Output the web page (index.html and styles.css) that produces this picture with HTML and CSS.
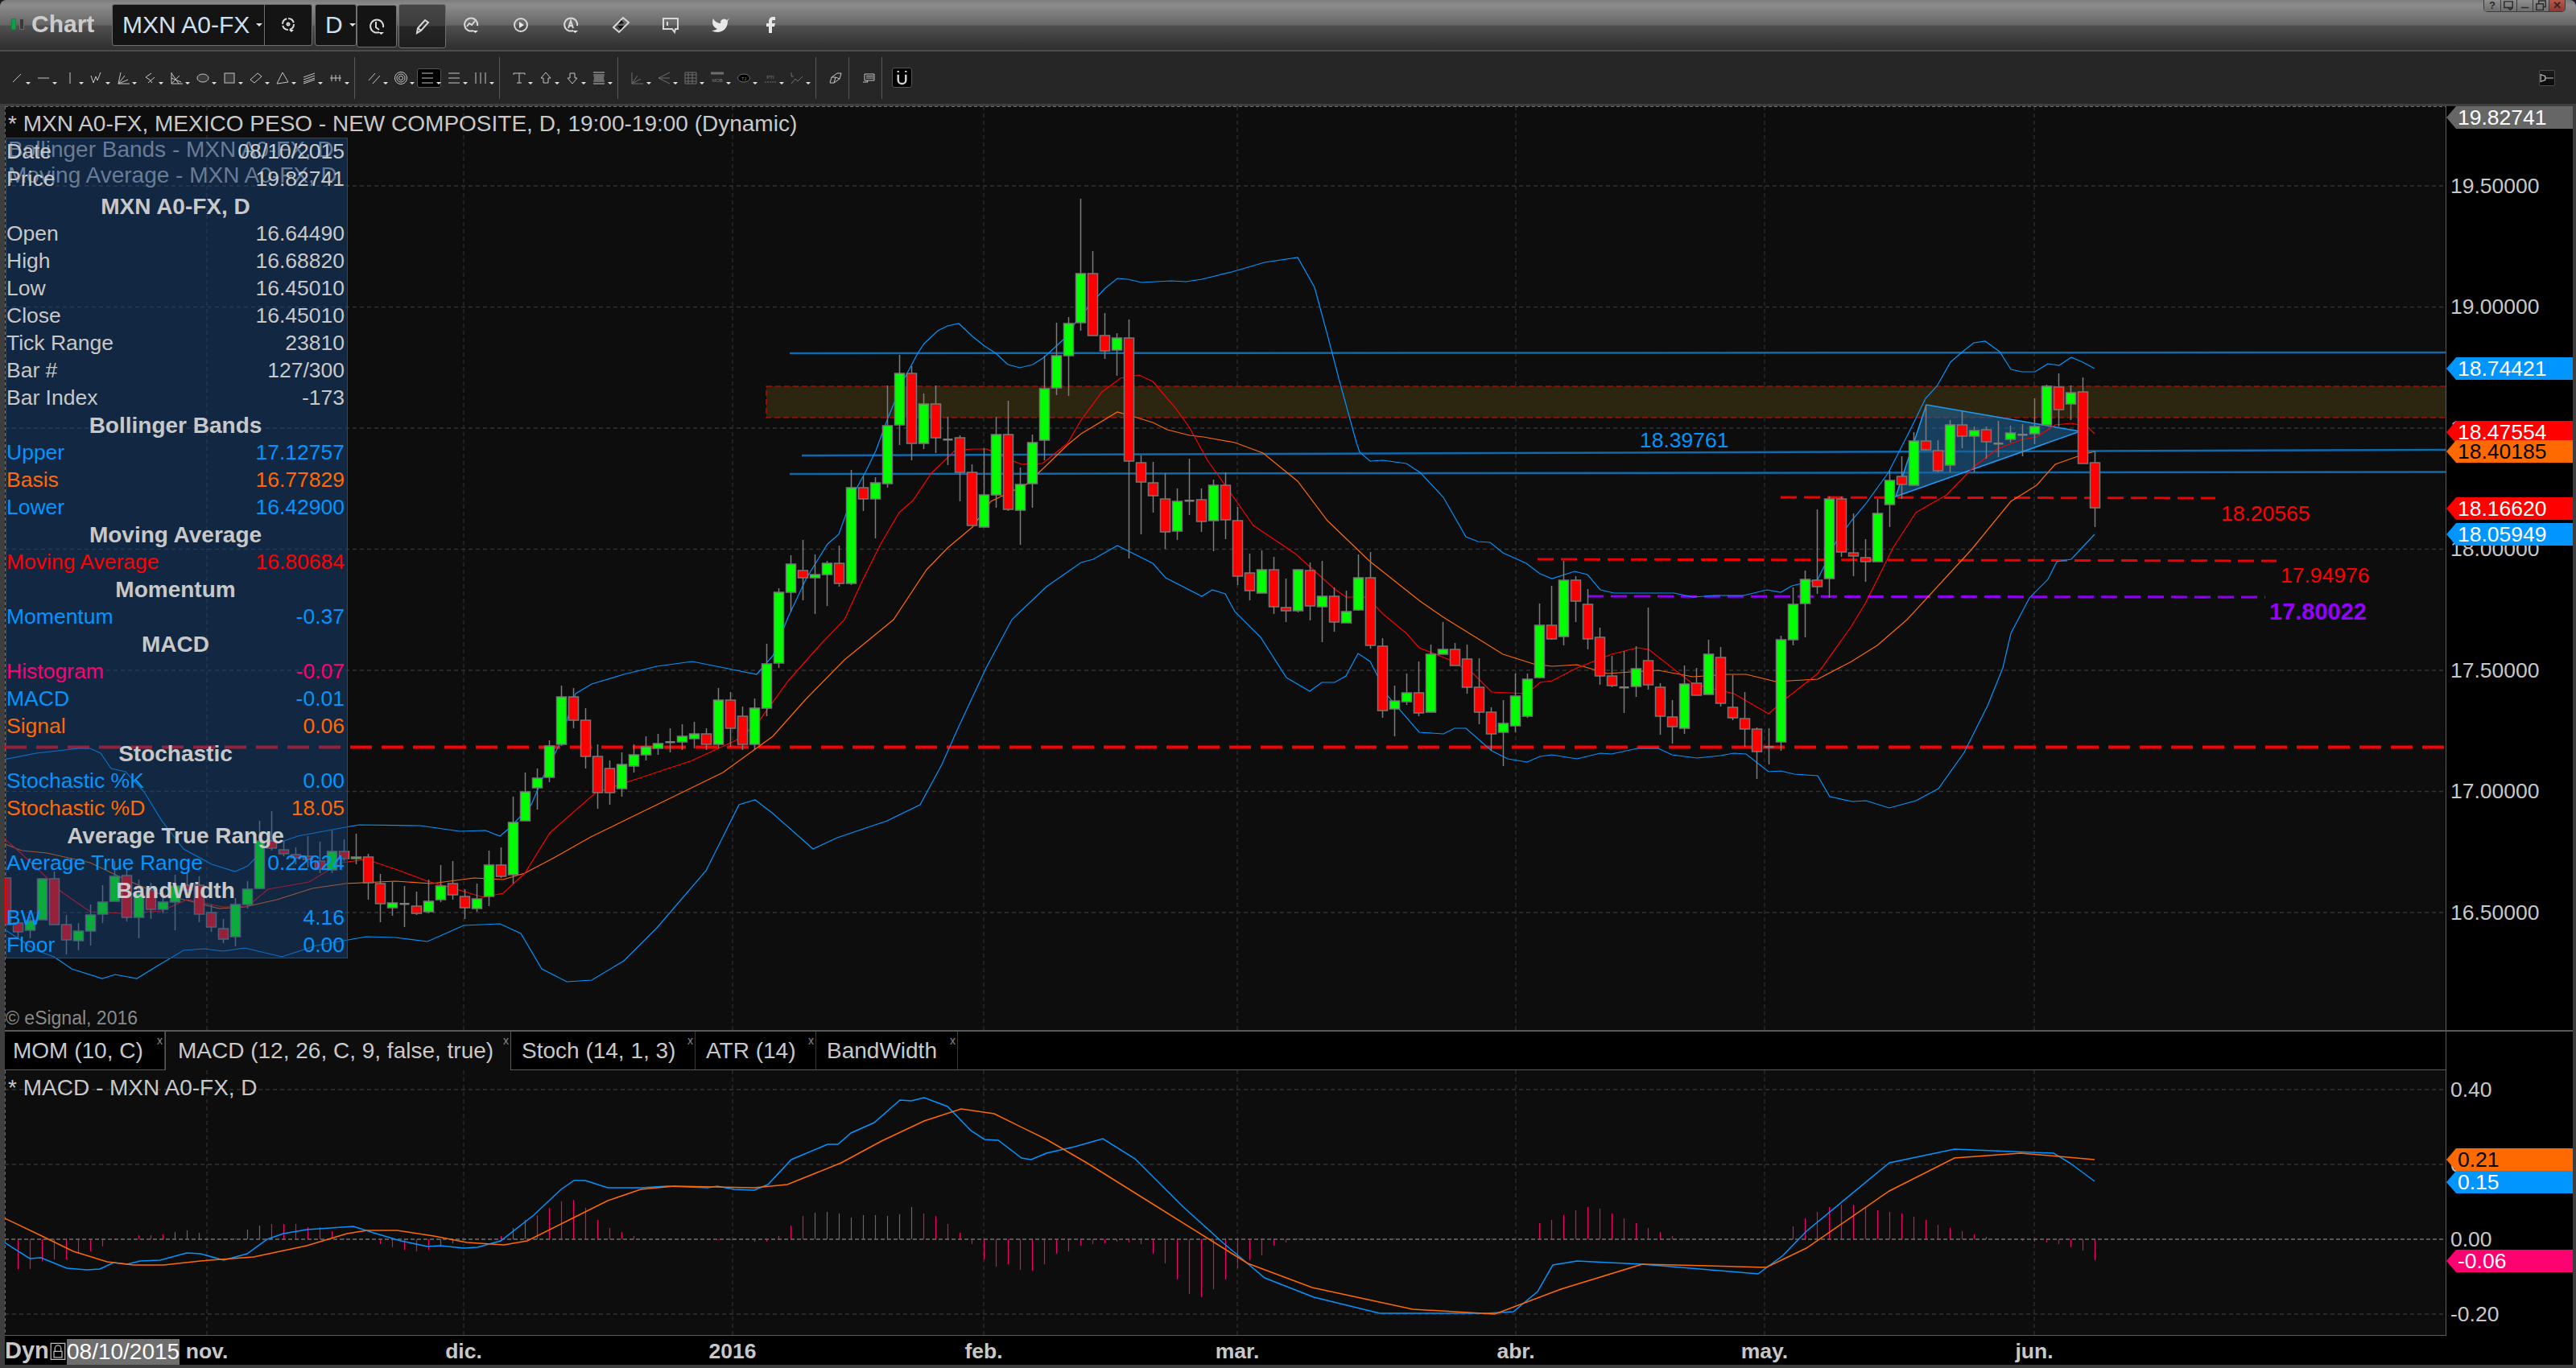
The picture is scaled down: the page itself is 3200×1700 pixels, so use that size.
FILE: index.html
```html
<!DOCTYPE html>
<html lang="es">
<head>
    <meta charset="UTF-8">
    <title>Chart - MXN A0-FX</title>
    <link rel="stylesheet" href="styles.css">
</head>
<body>
<div class="window">
    <header class="titlebar">
        <span class="led led-on"></span><span class="led"></span>
        <span class="app-name">Chart</span>
        <div class="symbol-box">
            <span class="symbol">MXN A0-FX</span><i class="caret small"></i>
            <span class="symbol-gear">
                <svg class="ticon" viewBox="0 0 24 24"><circle cx="12" cy="11" r="7" stroke-dasharray="9 2"/><circle cx="12" cy="11" r="1.500"/><path class="solid" d="M13 18h6l-3 3z"/></svg>
            </span>
        </div>
        <div class="interval-box"><span class="symbol">D</span><i class="caret small"></i></div>
        <div class="clock-box">
            <svg class="ticon" viewBox="0 0 24 24"><path d="M15 19a8 8 0 1 1 5-6"/><path d="M11 6v7l4 3"/><path class="solid" d="M14 19h7l-3.500 3z"/></svg>
        </div>
        <div class="pencil-box">
            <svg class="ticon" viewBox="0 0 24 24"><path d="M5 20l1-6 9-10 4 3-9 10zM6 14l4 3"/></svg>
        </div>
        <span class="title-icon"><svg class="ticon" viewBox="0 0 24 24"><path d="M15 19a8 8 0 1 1 5-6"/><path d="M7 14l3-4 3 2 4-5"/><path class="solid" d="M14 19h7l-3.500 3z"/></svg></span>
        <span class="title-icon"><svg class="ticon" viewBox="0 0 24 24"><circle cx="12" cy="12" r="8"/><path class="solid" d="M10 8l6 4-6 4z"/></svg></span>
        <span class="title-icon"><svg class="ticon" viewBox="0 0 24 24"><path d="M15 19a8 8 0 1 1 5-6"/><path d="M9 16l3-9 3 9M10 13h4"/><path class="solid" d="M14 19h7l-3.500 3z"/></svg></span>
        <span class="title-icon"><svg class="ticon" viewBox="0 0 24 24"><path d="M15 3l7 6-12 12-7-6z"/><path class="dark" d="M9 11l4-5 3 4zM8 13h8l-4 5z"/></svg></span>
        <span class="title-icon"><svg class="ticon" viewBox="0 0 24 24"><path d="M3 4h18v13h-3l-1 4-3-4H3z"/><path d="M8 8v5"/></svg></span>
        <span class="title-icon"><svg class="ticon solid" viewBox="0 0 24 24"><path d="M23 3a10.9 10.9 0 0 1-3 3 4.5 4.5 0 0 0-7.9 3v1A10.7 10.7 0 0 1 3 4s-4 9 5 13a11.6 11.6 0 0 1-7 2c9 5 20 0 20-11.5 0-.3 0-.5-.1-.8A7.7 7.7 0 0 0 23 3z"/></svg></span>
        <span class="title-icon"><svg class="ticon solid" viewBox="0 0 24 24"><path d="M18 2h-3a5 5 0 0 0-5 5v3H7v4h3v8h4v-8h3l1-4h-4V7a1 1 0 0 1 1-1h3z"/></svg></span>
        <div class="win-buttons">
            <span class="win-btn">?</span>
            <span class="win-btn"><svg viewBox="0 0 20 14"><path d="M4 2h11v8H4zM9 10l3 3 3-3" /></svg></span>
            <span class="win-btn"><svg viewBox="0 0 20 14"><path d="M5 10h10"/></svg></span>
            <span class="win-btn"><svg viewBox="0 0 20 14"><path d="M4 5h9v8H4zM7 5V1h9v8h-3"/></svg></span>
            <span class="win-btn win-close">✕</span>
        </div>
    </header>

    <div class="toolbar">
        <span class="tool"><svg viewBox="0 0 16 16"><path d="M3 13 13 3"/></svg><i class="caret"></i></span>
        <span class="tool"><svg viewBox="0 0 16 16"><path d="M1 8h14"/></svg><i class="caret"></i></span>
        <span class="tool"><svg viewBox="0 0 16 16"><path d="M8 1v14"/></svg><i class="caret"></i></span>
        <span class="tool"><svg viewBox="0 0 16 16"><path d="M1 5l3 9 3-8 2 5 4-10"/></svg><i class="caret"></i></span>
        <span class="tool"><svg viewBox="0 0 16 16"><path d="M2 15 5 1M2 15l8-10M2 15l12-5M2 15h14"/></svg><i class="caret"></i></span>
        <span class="tool"><svg viewBox="0 0 16 16"><path d="M3 7l7-5M6 14l8-7M3 7l5 3 3 4"/></svg><i class="caret"></i></span>
        <span class="tool"><svg viewBox="0 0 16 16"><path d="M2 2l9 13M2 15 12 5M2 15h14M2 1v14M2 8l12 5"/></svg><i class="caret"></i></span>
        <span class="tool"><svg viewBox="0 0 16 16"><ellipse class="shade" cx="8" cy="8" rx="7" ry="5"/></svg><i class="caret"></i></span>
        <span class="tool"><svg viewBox="0 0 16 16"><rect class="shade" x="2" y="2" width="12" height="12"/></svg><i class="caret"></i></span>
        <span class="tool"><svg viewBox="0 0 16 16"><path d="M10 2l5 4-9 8-5-4z"/></svg><i class="caret"></i></span>
        <span class="tool"><svg viewBox="0 0 16 16"><path d="M8 1l7 12-14 2z"/></svg><i class="caret"></i></span>
        <span class="tool"><svg viewBox="0 0 16 16"><path d="M1 7l14-5M1 10l14-5M1 13l14-5M1 15l14-5"/></svg><i class="caret"></i></span>
        <span class="tool"><svg viewBox="0 0 16 16"><path d="M1 8h14M3 4v8M8 4v8M13 4v8"/></svg><i class="caret"></i></span>
        <span class="tb-sep"></span>
        <span class="tool"><svg viewBox="0 0 16 16"><path d="M1 11 9 2M6 15l9-10"/></svg><i class="caret"></i></span>
        <span class="tool"><svg viewBox="0 0 16 16"><circle cx="8" cy="8" r="7.5"/><circle cx="8" cy="8" r="5"/><circle cx="8" cy="8" r="2.5"/></svg><i class="caret"></i></span>
        <span class="tool tool-on"><svg viewBox="0 0 16 16"><path d="M1 2h14M1 8h14M1 14h14"/></svg><i class="caret"></i></span>
        <span class="tool"><svg viewBox="0 0 16 16"><path d="M1 2h14M1 8h14M1 14h14"/></svg><i class="caret"></i></span>
        <span class="tool"><svg viewBox="0 0 16 16"><path d="M2 1v14M8 1v14M14 1v14"/></svg><i class="caret"></i></span>
        <span class="tb-sep"></span>
        <span class="tool"><svg viewBox="0 0 16 16"><path d="M1 2h14M8 2v12M5 14h6M1 2v2M15 2v2"/></svg><i class="caret"></i></span>
        <span class="tool"><svg viewBox="0 0 16 16"><path d="M8 1l6 7h-3v6H5V8H2z"/></svg><i class="caret"></i></span>
        <span class="tool"><svg viewBox="0 0 16 16"><path d="M5 2h6v6h3l-6 7-6-7h3z"/></svg><i class="caret"></i></span>
        <span class="tool"><svg viewBox="0 0 16 16"><path class="band" d="M1 3h14l-1 5 1 5H1l1-5z"/><path d="M1 1h14M1 15h14"/></svg><i class="caret"></i></span>
        <span class="tb-sep"></span>
        <span class="tool tool-dim"><svg viewBox="0 0 16 16"><path d="M1 15V1M1 15h14M1 15 8 5M1 15l11-6"/></svg><i class="caret"></i></span>
        <span class="tool tool-dim"><svg viewBox="0 0 16 16"><path d="M15 1 1 8l14 7M1 8h14"/></svg><i class="caret"></i></span>
        <span class="tool tool-dim"><svg viewBox="0 0 16 16"><path d="M1 1h14v14H1zM1 4h14M1 8h14M1 12h14M5 1v14M10 1v14"/></svg><i class="caret"></i></span>
        <span class="tool tool-dim"><svg viewBox="0 0 16 16"><path class="wide" d="M0 2h16"/><text x="8" y="13">MOB</text></svg><i class="caret"></i></span>
        <span class="tool tool-dim"><svg viewBox="0 0 16 16"><ellipse class="black" cx="8" cy="8" rx="7.5" ry="5"/><text x="8" y="10.5">TJ</text></svg><i class="caret"></i></span>
        <span class="tool tool-dim"><svg viewBox="0 0 16 16"><text x="8" y="9">PTI</text><path d="M1 13h14" stroke-dasharray="2 1"/></svg><i class="caret"></i></span>
        <span class="tool tool-dim"><svg viewBox="0 0 16 16"><path d="M1 1v5h3M1 15l5-6 3 3 6-6"/></svg><i class="caret"></i></span>
        <span class="tb-sep"></span>
        <span class="tool tool-plain"><svg viewBox="0 0 16 16"><path d="M1 14l2-7 7-5h5l-2 7-7 5zM3 7h5l-2 7M8 7l5 2"/></svg></span>
        <span class="tb-sep"></span>
        <span class="tool tool-plain"><svg viewBox="0 0 16 16"><path d="M3 3h12v8H3zM5 5.5h9M5 8h9"/><path d="M1 13h6l-1-2"/></svg></span>
        <span class="tb-sep"></span>
        <span class="magnet"><svg viewBox="0 0 16 24"><path d="M3 8v7a5 5 0 0 0 10 0V8"/><path d="M3 3v2M13 3v2"/></svg></span>
        <span class="pin"><svg viewBox="0 0 16 16"><path d="M1 4v8l5-2V6zM6 8h9"/></svg></span>
    </div>

    <main class="workspace">
        <div class="chart-row">
            <div class="pane">
                <svg class="plot" id="price-plot" viewBox="6 132 3032 1148"></svg>
                <div class="legend">
                    <div class="legend-main">* MXN A0-FX, MEXICO PESO - NEW COMPOSITE, D, 19:00-19:00 (Dynamic)</div>
                    <div>Bollinger Bands - MXN A0-FX, D</div>
                    <div>Moving Average - MXN A0-FX, D</div>
                </div>
                <span class="note note-blue" style="left:2031px;top:399px">18.39761</span>
                <span class="note note-red" style="left:2753px;top:490px">18.20565</span>
                <span class="note note-red" style="left:2827px;top:567px">17.94976</span>
                <span class="note note-purple" style="left:2813px;top:612px">17.80022</span>
                <span class="copyright">© eSignal, 2016</span>

                <div class="data-panel">
                    <div class="row"><span>Date</span><span>08/10/2015</span></div>
                    <div class="row"><span>Price</span><span>19.82741</span></div>
                    <div class="row row-head">MXN A0-FX, D</div>
                    <div class="row"><span>Open</span><span>16.64490</span></div>
                    <div class="row"><span>High</span><span>16.68820</span></div>
                    <div class="row"><span>Low</span><span>16.45010</span></div>
                    <div class="row"><span>Close</span><span>16.45010</span></div>
                    <div class="row"><span>Tick Range</span><span>23810</span></div>
                    <div class="row"><span>Bar #</span><span>127/300</span></div>
                    <div class="row"><span>Bar Index</span><span>-173</span></div>
                    <div class="row row-head">Bollinger Bands</div>
                    <div class="row blue"><span>Upper</span><span>17.12757</span></div>
                    <div class="row orange"><span>Basis</span><span>16.77829</span></div>
                    <div class="row blue"><span>Lower</span><span>16.42900</span></div>
                    <div class="row row-head">Moving Average</div>
                    <div class="row red"><span>Moving Average</span><span>16.80684</span></div>
                    <div class="row row-head">Momentum</div>
                    <div class="row blue"><span>Momentum</span><span>-0.37</span></div>
                    <div class="row row-head">MACD</div>
                    <div class="row pink"><span>Histogram</span><span>-0.07</span></div>
                    <div class="row blue"><span>MACD</span><span>-0.01</span></div>
                    <div class="row orange"><span>Signal</span><span>0.06</span></div>
                    <div class="row row-head">Stochastic</div>
                    <div class="row blue"><span>Stochastic %K</span><span>0.00</span></div>
                    <div class="row orange"><span>Stochastic %D</span><span>18.05</span></div>
                    <div class="row row-head">Average True Range</div>
                    <div class="row blue"><span>Average True Range</span><span>0.22624</span></div>
                    <div class="row row-head">BandWidth</div>
                    <div class="row blue"><span>BW</span><span>4.16</span></div>
                    <div class="row blue"><span>Floor</span><span>0.00</span></div>
                </div>
            </div>
            <div class="axis">
                <span class="tick" style="top:99px">19.50000</span>
                <span class="tick" style="top:249px">19.00000</span>
                <span class="tick" style="top:400px">18.50000</span>
                <span class="tick" style="top:550px">18.00000</span>
                <span class="tick" style="top:701px">17.50000</span>
                <span class="tick" style="top:851px">17.00000</span>
                <span class="tick" style="top:1002px">16.50000</span>
                <span class="tag tag-gray" style="top:0">19.82741</span>
                <span class="tag tag-blue" style="top:312px">18.74421</span>
                <span class="tag tag-red" style="top:391px">18.47554</span>
                <span class="tag tag-orange" style="top:415px">18.40185</span>
                <span class="tag tag-red" style="top:486px">18.16620</span>
                <span class="tag tag-blue" style="top:518px">18.05949</span>
            </div>
        </div>

        <div class="divider"></div>

        <div class="tab-row">
            <div class="tabs">
                <span class="tab tab-mom">MOM (10, C)<i>x</i></span>
                <span class="tab tab-on">MACD (12, 26, C, 9, false, true)<i>x</i></span>
                <span class="tab tab-stoch">Stoch (14, 1, 3)<i>x</i></span>
                <span class="tab tab-atr">ATR (14)<i>x</i></span>
                <span class="tab tab-bw">BandWidth<i>x</i></span>
            </div>
        </div>

        <div class="macd-row">
            <div class="pane pane-macd">
                <svg class="plot" id="macd-plot" viewBox="6 1330 3032 329"></svg>
                <div class="legend legend-macd">* MACD - MXN A0-FX, D</div>
            </div>
            <div class="axis">
                <span class="tick" style="top:24px">0.40</span>
                <span class="tick" style="top:117px">0.20</span>
                <span class="tick" style="top:210px">0.00</span>
                <span class="tick" style="top:303px">-0.20</span>
                <span class="tag tag-orange" style="top:97px">0.21</span>
                <span class="tag tag-blue" style="top:125px">0.15</span>
                <span class="tag tag-pink" style="top:223px">-0.06</span>
            </div>
        </div>

        <div class="time-row">
            <div class="time-axis">
                <span class="dyn">Dyn</span>
                <span class="lock"><svg viewBox="0 0 16 18"><path d="M1 1h14v16H1zM5 9V6a3 3 0 0 1 6 0v3M4 9h8v6H4z"/></svg></span>
                <span class="cursor-date">08/10/2015</span>
                <span class="month" style="left:251px">nov.</span>
                <span class="month" style="left:570px">dic.</span>
                <span class="month" style="left:904px">2016</span>
                <span class="month" style="left:1216px">feb.</span>
                <span class="month" style="left:1531px">mar.</span>
                <span class="month" style="left:1877px">abr.</span>
                <span class="month" style="left:2186px">may.</span>
                <span class="month" style="left:2521px">jun.</span>
            </div>
        </div>
    </main>
</div>
<script src="chart.js"></script>
</body>
</html>
```

FILE: styles.css
```css
* {
    box-sizing: border-box;
}
html, body {
    margin: 0;
    padding: 0;
    background: #1c1c1c;
}
body {
    font-family: "Liberation Sans", Arial, sans-serif;
    font-size: 26.5px;
    color: #c8c8c8;
}
.window {
    width: 3200px;
    height: 1700px;
    display: flex;
    flex-direction: column;
    overflow: hidden;
    border-radius: 8px 8px 0 0;
    background: #444;
}

/* title bar */
.titlebar {
    height: 64px;
    flex: none;
    display: flex;
    align-items: flex-start;
    padding: 5px 0 0 14px;
    position: relative;
    border-bottom: 2px solid #4c4c4c;
    background: linear-gradient(#7c7c7c 0, #8c8c8c 6px, #666 31px, #505050 32px, #2e2e2e 62px);
}
.led {
    width: 6px;
    height: 14px;
    margin: 18px 4px 0 0;
    border: 1px solid #6c6c6c;
    background: #3a3a3a;
}
.led-on {
    background: #0ba04a;
    border-color: #0a8a3f;
}
.app-name {
    font-size: 30px;
    font-weight: bold;
    line-height: 50px;
    margin-left: 5px;
    width: 100px;
    color: #cccccc;
}
.symbol-box, .interval-box, .clock-box, .pencil-box {
    display: flex;
    align-items: center;
    background: #141414;
    border: 1px solid #707070;
    border-radius: 3px;
}
.symbol-box {
    width: 249px;
    height: 52px;
    padding-left: 12px;
}
.symbol {
    font-size: 30px;
    color: #cfe0f2;
}
.symbol-gear {
    margin-left: auto;
    width: 59px;
    height: 100%;
    display: flex;
    align-items: center;
    justify-content: center;
    border-left: 1px solid #707070;
}
.interval-box {
    width: 52px;
    height: 52px;
    margin-left: 3px;
    padding-left: 12px;
}
.clock-box {
    width: 50px;
    height: 53px;
    margin-top: 1px;
    justify-content: center;
}
.pencil-box {
    width: 59px;
    height: 55px;
    margin-left: 2px;
    justify-content: center;
    background: linear-gradient(#464646 0, #3c3c3c 26px, #262626 27px, #1e1e1e 100%);
}
.title-icon {
    width: 62px;
    height: 52px;
    display: flex;
    align-items: center;
    justify-content: center;
}
.title-icon:first-of-type {
    margin-left: 2px;
}
.ticon {
    width: 24px;
    height: 24px;
    fill: none;
    stroke: #d8d8d8;
    stroke-width: 2;
}
.ticon.solid, .ticon .solid {
    fill: #e8e8e8;
    stroke: none;
}
.ticon .dark {
    fill: #111;
    stroke: none;
}
.caret {
    display: block;
    width: 0;
    height: 0;
    border-left: 4px solid transparent;
    border-right: 4px solid transparent;
    border-top: 4px solid #e4e4e4;
}
.caret.small {
    margin-left: 8px;
}
.win-buttons {
    position: absolute;
    top: 0;
    right: 13px;
    display: flex;
    height: 15px;
    border: 1px solid #3c3c3c;
    border-top: none;
    border-radius: 0 0 5px 5px;
    overflow: hidden;
}
.win-btn {
    width: 20px;
    font-size: 13px;
    font-weight: bold;
    line-height: 14px;
    text-align: center;
    color: #2a2a2a;
    border-left: 1px solid #3c3c3c;
    background: linear-gradient(#8e8e8e, #6e6e6e);
}
.win-btn:first-child {
    border-left: none;
}
.win-btn svg {
    display: block;
    fill: none;
    stroke: #2a2a2a;
    stroke-width: 1.5;
}
.win-close {
    background: linear-gradient(#b9584a, #96392d);
}

/* drawing tools */
.toolbar {
    height: 65px;
    flex: none;
    display: flex;
    align-items: center;
    padding: 0 4px 0 5px;
    background: #262626;
}
.tool {
    width: 33px;
    height: 24px;
    flex: none;
    display: flex;
    align-items: center;
    padding-left: 8px;
}
.tool svg {
    width: 16px;
    height: 16px;
    flex: none;
    fill: none;
    stroke: #c4c4c4;
    stroke-width: 1;
    overflow: visible;
}
.tool .caret {
    margin: 14px 0 0 3px;
    border-left-width: 3px;
    border-right-width: 3px;
    border-top-width: 3px;
}
.tool-on {
    width: 30px;
    margin-left: 3px;
    padding-left: 4px;
    background: #000;
    border: 1px solid #555;
    border-radius: 3px;
}
.tool-dim svg {
    stroke: #6e6e6e;
}
.tool svg text {
    font-size: 6px;
    text-anchor: middle;
    fill: #7c7c7c;
    stroke: none;
}
.tool svg .wide {
    stroke-width: 3;
}
.tool svg .black {
    fill: #000;
}
.tool svg .shade {
    fill: #3a3a3a;
}
.tool svg .band {
    fill: #6a6a6a;
    stroke: none;
}
.tool-plain {
    width: 26px;
}
.tb-sep {
    width: 1px;
    height: 52px;
    flex: none;
    margin: 0 8px 0 6px;
    background: #585858;
}
.magnet {
    width: 25px;
    height: 25px;
    margin-left: 4px;
    background: #000;
    border: 1px solid #555;
    border-radius: 3px;
}
.magnet svg {
    display: block;
    width: 100%;
    height: 100%;
    fill: none;
    stroke: #d8d8d8;
    stroke-width: 2.5;
}
.pin {
    width: 20px;
    height: 20px;
    margin-left: auto;
    margin-right: 22px;
    background: linear-gradient(#1a1a1a, #0a0a0a);
    border: 1px solid #4a4a4a;
    border-radius: 2px;
}
.pin svg {
    display: block;
    fill: none;
    stroke: #c4c4c4;
    stroke-width: 1;
}

/* chart panes */
.workspace {
    flex: 1;
    display: flex;
    flex-direction: column;
    padding: 3px 4px 4px 6px;
    background: #3e3e3e;
}
.chart-row {
    height: 1148px;
    flex: none;
    display: flex;
}
.pane {
    width: 3032px;
    flex: none;
    position: relative;
    overflow: hidden;
    background: #0d0d0d;
}
.plot {
    position: absolute;
    top: 0;
    left: 0;
    width: 100%;
    height: 100%;
}
.legend {
    position: relative;
    padding: 6px 0 0 4px;
    font-size: 28px;
    line-height: 32px;
    color: #a8a8a8;
    white-space: nowrap;
}
.legend-main {
    color: #c8c8c8;
}
.legend-macd {
    padding-top: 6px;
    color: #c8c8c8;
}
.note {
    position: absolute;
    line-height: 32px;
}
.note-blue {
    color: #0095ff;
}
.note-red {
    color: #ff0000;
}
.note-purple {
    color: #9500ff;
    font-size: 29px;
    font-weight: bold;
}
.copyright {
    position: absolute;
    left: 1px;
    bottom: 1px;
    font-size: 23px;
    color: #8a8a8a;
}
.data-panel {
    position: absolute;
    left: 1px;
    top: 39px;
    width: 425px;
    height: 1020px;
    background: rgba(24, 71, 131, 0.45);
    border: 1px solid #2d4a64;
}
.row {
    height: 34px;
    line-height: 33px;
    padding: 0 3px 0 0;
    display: flex;
    justify-content: space-between;
    white-space: nowrap;
}
.row-head {
    justify-content: center;
    font-size: 28px;
    font-weight: bold;
}
.blue {
    color: #0095ff;
}
.orange {
    color: #ff6a00;
}
.red {
    color: #ff0000;
}
.pink {
    color: #ff0070;
}

/* value axis */
.axis {
    flex: 1;
    position: relative;
    overflow: hidden;
    background: #000;
    border-left: 1px solid #5a5a5a;
}
.tick {
    position: absolute;
    left: 5px;
    transform: translateY(-50%);
    color: #c8c8c8;
}
.tag {
    position: absolute;
    left: 0;
    width: 100%;
    height: 28px;
    padding-left: 14px;
    line-height: 28px;
    color: #fff;
    clip-path: polygon(0 50%, 12px 0, 100% 0, 100% 100%, 12px 100%);
}
.tag-gray {
    background: #666;
}
.tag-blue {
    background: #0095ff;
}
.tag-red {
    background: #ff0000;
}
.tag-orange {
    background: #ff6a00;
    color: #000;
}
.tag-pink {
    background: #ff0070;
}
.divider {
    height: 2px;
    flex: none;
    background: #5a5a5a;
}

/* indicator tabs */
.tab-row {
    height: 48px;
    flex: none;
    background: #000;
}
.tabs {
    width: 3033px;
    height: 100%;
    display: flex;
    border-right: 1px solid #5a5a5a;
    border-bottom: 1px solid #5a5a5a;
}
.tab {
    position: relative;
    height: 100%;
    padding-left: 13px;
    font-size: 28px;
    line-height: 48px;
    color: #c8c8c8;
    border-right: 1px solid #3a3a3a;
    white-space: nowrap;
}
.tab i {
    position: absolute;
    top: 0;
    right: 2px;
    font-size: 14px;
    font-style: normal;
    line-height: 22px;
    color: #888;
}
.tab-mom {
    width: 199px;
    padding-left: 10px;
}
.tab-on {
    width: 430px;
    height: 49px;
    padding-left: 15px;
    background: #0d0d0d;
    border-left: 1px solid #5a5a5a;
    border-right: 1px solid #5a5a5a;
}
.tab-stoch {
    width: 229px;
}
.tab-atr {
    width: 150px;
}
.tab-bw {
    width: 176px;
}

.macd-row {
    height: 329px;
    flex: none;
    display: flex;
}

/* time axis */
.time-row {
    flex: 1;
    background: #000;
}
.time-axis {
    position: relative;
    width: 3033px;
    height: 100%;
    display: flex;
    align-items: center;
    border-top: 1px solid #5a5a5a;
}
.dyn {
    font-size: 29px;
    font-weight: bold;
    width: 56px;
}
.lock {
    width: 20px;
    height: 20px;
}
.lock svg {
    display: block;
    fill: none;
    stroke: #bbb;
    stroke-width: 1;
}
.cursor-date {
    width: 140px;
    height: 32px;
    margin-left: 1px;
    margin-top: 4px;
    font-size: 28px;
    line-height: 32px;
    text-align: center;
    white-space: nowrap;
    background: #6e6e6e;
    color: #fff;
}
.month {
    position: absolute;
    top: 2px;
    transform: translateX(-50%);
    font-weight: bold;
    line-height: 34px;
    color: #c8c8c8;
}
```

FILE: chart.js
```js
// Bars are [kind, body top, body bottom, wick top, wick bottom] in page pixels.
// kind: g up, r down, d doji (body top only, bottom ignored)
const bars = [
    ['r',1091,1149,1091,1150],['r',1147,1158,1147,1166],['g',1144,1156,1139,1166],['g',1092,1143,1092,1143],
    ['r',1092,1149,1083,1149],['r',1149,1168,1137,1186],['g',1157,1169,1147,1181],['g',1137,1157,1124,1175],
    ['g',1121,1136,1100,1147],['g',1089,1120,1070,1120],['r',1088,1140,1080,1145],['g',1111,1140,1093,1166],
    ['r',1106,1130,1097,1142],['g',1121,1130,1108,1135],['g',1101,1121,1087,1156],['r',1100,1106,1085,1112],
    ['r',1100,1136,1089,1146],['r',1134,1152,1124,1158],['r',1154,1167,1142,1172],['g',1124,1164,1116,1176],
    ['g',1105,1124,1095,1129],['g',1045,1104,1020,1105],['r',1045,1054,1008,1057],['r',1056,1061,1045,1064],
    ['r',1062,1066,1053,1074],['r',1064,1068,1039,1078],['r',1070,1080,1046,1085],['g',1058,1081,1032,1085],
    ['r',1058,1067,1043,1070],['g',1065,1067,1036,1074],['r',1065,1097,1061,1118],['r',1098,1123,1086,1146],
    ['g',1122,1128,1096,1138],['d',1123,0,1101,1152],['r',1126,1135,1108,1137],['g',1120,1133,1093,1135],
    ['g',1101,1118,1075,1121],['r',1098,1112,1070,1118],['r',1114,1128,1105,1142],['g',1117,1129,1098,1133],
    ['g',1075,1114,1057,1126],['r',1075,1089,1053,1091],['g',1022,1087,990,1098],['g',984,1020,960,1020],
    ['g',967,979,955,1006],['g',927,966,920,972],['g',866,925,852,927],
    // 47
    ['r',866,895,855,905],['r',895,940,880,955],['r',940,985,925,1005],['r',955,985,945,1000],
    ['g',950,980,935,990],['g',938,952,925,960],['g',928,938,915,945],['g',924,930,912,938],
    ['d',922,0,905,935],['g',915,922,900,932],['g',912,918,897,930],['r',912,925,905,932],
    ['g',870,925,855,930],['r',870,905,860,928],['r',890,925,878,932],['g',880,925,868,932],
    ['g',825,880,800,890],
    // 64
    ['g',736,824,731,830],['g',701,736,690,760],['r',709,718,671,746],['g',714,718,689,763],
    ['g',700,714,697,753],['r',700,725,678,729],['g',606,725,584,727],['r',606,620,592,635],
    ['g',600,620,593,669],['g',529,601,479,606],['g',464,528,441,553],['r',464,551,455,572],
    ['g',502,551,489,558],['r',502,544,479,563],['d',546,0,518,578],['r',544,587,541,623],
    ['r',587,653,577,653],['g',615,655,557,655],['g',540,615,518,631],['r',540,633,498,635],
    ['g',602,634,581,677],['g',550,601,540,631],['g',483,547,442,572],['g',442,482,401,491],
    ['g',402,442,394,492],['g',340,401,247,411],['r',340,417,312,417],['r',417,436,389,446],
    ['g',420,435,414,467],['r',420,573,397,694],['r',575,599,566,664],['r',600,616,574,637],
    ['r',620,661,588,682],['g',623,660,607,671],['d',622,0,570,640],['r',621,648,607,661],
    // 100
    ['g',603,647,596,685],['r',603,646,587,670],['r',647,716,630,727],['r',712,734,688,746],
    ['g',708,737,684,737],['r',708,754,692,763],['r',755,759,719,773],['g',708,759,707,761],
    ['r',709,753,699,771],['g',741,754,697,798],['r',741,773,730,785],['g',760,774,734,774],
    ['g',718,758,689,759],['r',718,802,686,806],['r',803,883,793,892],['g',871,881,852,915],
    ['g',861,872,837,876],['r',861,886,822,890],['g',813,885,801,885],['g',807,813,773,813],
    ['r',807,827,799,827],['r',819,854,801,862],['r',854,885,818,900],['r',885,912,879,933],
    ['g',899,910,870,952],['g',865,902,837,910],['g',844,890,837,892],['g',777,842,750,843],
    ['r',777,794,728,795],['g',721,791,697,802],['r',721,747,716,773],['r',751,794,732,807],
    ['r',792,840,780,851],['r',840,852,815,854],['d',854,0,809,886],['g',831,853,803,866],
    ['r',821,851,755,857],['r',854,890,849,913],['r',891,903,870,924],['g',850,905,827,912],
    ['r',849,864,830,864],['g',813,863,795,863],['r',817,874,804,878],['r',879,892,839,895],
    ['r',893,906,860,928],['r',906,934,904,968],['d',928,0,905,950],['g',795,922,790,933],
    ['g',751,795,730,802],['g',720,750,709,792],['r',721,729,633,738],['g',620,719,617,743],
    ['r',620,686,617,692],['r',687,691,638,716],['r',693,698,670,723],['g',638,698,620,698],
    ['g',597,627,585,655],['r',592,602,567,620],
    // 158
    ['g',548,603,537,603],['r',548,559,503,560],['r',560,585,547,587],['g',528,578,522,587],
    ['r',528,542,510,557],['g',535,542,530,587],['r',534,549,530,570],['d',551,0,523,568],
    ['g',538,546,529,550],['d',540,0,527,567],['g',530,539,495,552],['g',480,528,478,528],
    ['r',481,509,464,530],['g',488,502,479,522],['r',487,576,469,576],['r',575,631,561,655]
];

const upper = '4,944 45,936 98,930 112,930 125,936 138,955 156,959 179,984 201,1020 228,1055 263,1074 292,1083 308,1076 330,1053 370,1039 429,1028 446,1025 522,1026 571,1033 603,1032 621,1039 634,1028 660,1000 674,967 694,927 715,862 735,850 775,838 816,828 860,822 900,830 940,838 960,815 979,767 1002,718 1028,676 1042,664 1059,616 1076,585 1088,560 1102,522 1122,473 1140,439 1148,427 1165,411 1177,405 1191,402 1208,418 1223,430 1237,439 1252,453 1267,457 1283,453 1297,444 1323,420 1340,395 1372,359 1388,346 1401,347 1418,351 1455,349 1473,350 1493,347 1530,338 1571,326 1612,320 1633,357 1650,420 1663,470 1685,550 1689,562 1702,573 1718,572 1747,576 1764,587 1793,618 1821,667 1836,673 1851,674 1867,687 1896,700 1913,713 1928,719 1956,710 1972,714 1988,733 2005,737 2080,737 2103,742 2131,740 2166,740 2195,733 2212,736 2226,728 2258,720 2281,673 2300,647 2317,627 2346,587 2375,530 2392,495 2406,480 2423,450 2438,437 2452,426 2466,424 2484,437 2498,459 2512,462 2528,462 2544,452 2558,454 2573,444 2587,450 2602,458';
const lower = '4,1154 45,1181 67,1189 89,1204 127,1216 143,1211 170,1216 196,1200 228,1181 254,1179 277,1182 304,1178 350,1189 393,1175 455,1164 491,1165 531,1170 576,1150 621,1148 647,1160 673,1204 704,1220 735,1218 775,1194 816,1153 877,1082 918,1000 938,994 959,1010 1010,1055 1040,1041 1102,1020 1143,1000 1170,950 1190,905 1225,830 1257,770 1300,729 1343,699 1358,695 1388,678 1432,700 1448,718 1493,741 1506,733 1522,738 1534,760 1566,792 1598,842 1627,859 1642,848 1658,848 1672,840 1687,812 1702,822 1724,865 1763,910 1793,912 1807,905 1821,905 1853,933 1873,943 1897,947 1913,940 1928,938 1959,943 1988,936 2002,937 2034,930 2060,930 2077,938 2108,942 2137,939 2154,936 2169,937 2197,959 2212,958 2229,962 2258,964 2273,990 2301,996 2318,995 2347,1004 2380,995 2408,980 2440,935 2469,877 2488,830 2498,787 2521,743 2544,720 2555,698 2573,695 2602,664';
const basis = '4,1048 27,1057 58,1060 112,1072 156,1093 196,1110 237,1120 272,1129 304,1127 344,1118 388,1104 429,1098 491,1095 536,1098 589,1091 625,1093 652,1085 688,1066 734,1040 816,1000 898,960 960,915 1000,870 1049,820 1110,770 1151,708 1177,681 1208,655 1231,623 1275,602 1295,583 1326,553 1343,539 1388,512 1409,518 1432,525 1450,534 1478,541 1495,543 1534,550 1569,563 1612,598 1649,647 1701,697 1764,747 1793,767 1867,813 1905,825 1928,828 1959,826 1997,837 2025,835 2060,833 2103,841 2146,838 2169,838 2206,847 2258,844 2300,822 2332,802 2369,770 2415,720 2449,683 2498,623 2530,603 2553,577 2587,565 2602,561';
const average = '4,1041 18,1053 45,1078 76,1108 112,1133 152,1135 201,1132 232,1118 277,1127 308,1126 333,1105 384,1096 424,1072 455,1068 491,1080 531,1095 567,1105 600,1115 625,1110 652,1085 683,1035 700,1020 740,985 800,965 860,945 914,920 940,900 980,845 1020,800 1049,770 1071,722 1094,676 1117,637 1134,622 1157,588 1186,560 1208,558 1226,558 1254,571 1269,577 1295,576 1326,551 1343,522 1369,487 1392,470 1415,466 1432,474 1461,508 1478,532 1500,572 1529,613 1557,653 1609,688 1658,732 1672,742 1698,742 1718,763 1747,787 1763,805 1801,820 1830,837 1853,860 1897,862 1913,848 1928,846 1959,830 2002,813 2034,805 2048,807 2103,850 2154,862 2197,887 2220,867 2258,837 2300,778 2317,750 2352,680 2380,637 2418,615 2452,580 2481,558 2512,546 2530,543 2553,528 2573,526 2593,530 2602,539';

const macd = '4,1543 37,1564 51,1563 83,1576 108,1578 124,1577 141,1569 158,1571 174,1567 199,1566 232,1557 249,1558 278,1566 307,1558 332,1540 352,1533 381,1528 439,1524 464,1532 498,1542 531,1549 547,1548 576,1551 593,1550 622,1542 663,1510 697,1478 713,1467 727,1467 755,1476 796,1476 829,1474 879,1476 891,1474 912,1478 937,1479 954,1472 983,1441 1028,1422 1041,1422 1057,1408 1086,1395 1118,1367 1132,1368 1148,1364 1177,1375 1206,1405 1223,1416 1240,1417 1269,1439 1281,1441 1300,1433 1335,1425 1370,1415 1410,1440 1470,1500 1520,1545 1571,1588 1632,1612 1714,1632 1847,1632 1880,1630 1910,1605 1929,1572 1959,1567 2040,1571 2184,1583 2215,1560 2244,1530 2347,1445 2428,1428 2551,1433 2571,1445 2602,1468';
const signal = '4,1513 50,1535 91,1555 133,1568 166,1572 203,1572 249,1567 315,1562 381,1548 431,1533 456,1529 493,1529 539,1536 580,1544 626,1547 655,1542 705,1517 755,1492 796,1478 837,1474 937,1476 978,1472 1045,1445 1095,1418 1148,1393 1194,1378 1235,1384 1300,1416 1350,1445 1430,1495 1550,1570 1630,1600 1755,1627 1857,1633 1939,1602 2040,1571 2122,1573 2194,1575 2244,1551 2347,1480 2428,1439 2510,1433 2602,1441';

// histogram height per bar, up is positive
const hist = [0,-37,-37,-27,-25,-25,-18,-15,-9,-1,0,5,5,6,9,11,8,1,1,1,12,17,19,19,19,15,15,10,1,1,1,-6,-10,-13,-15,-13,-8,-5,-1,0,1,4,14,24,30,39,47,49,39,24,14,9,4,0,-1,-1,-1,0,0,-1,-1,1,-3,-3,4,17,29,33,34,32,27,30,30,29,31,40,32,29,19,8,-6,-25,-34,-31,-38,-39,-31,-18,-15,-8,-6,-5,-3,-4,-6,-18,-30,-50,-68,-72,-62,-50,-36,-26,-20,-8,-4,1,-1,1,-1,0,1,0,-1,1,0,1,-1,0,1,0,-1,1,0,0,1,20,24,30,36,40,38,32,26,20,14,9,4,1,0,1,-1,0,1,-1,0,1,16,26,34,40,43,43,40,36,34,32,28,24,18,14,10,6,3,1,0,-2,-3,-4,-6,-10,-14,-26];
const histGray = new Set([14,15,16,20,21,36,37,38,42,43,67,68,69,70,71,72,73,74,75]);

const vGrid = [257, 576, 910, 1222, 1537, 1883, 2192, 2527];
const NS = 'http://www.w3.org/2000/svg';

function add(svg, tag, attrs) {
    const el = document.createElementNS(NS, tag);
    for (const key in attrs) el.setAttribute(key, attrs[key]);
    svg.appendChild(el);
    return el;
}

function hline(svg, x1, y1, x2, y2, color, width, dash) {
    add(svg, 'line', { x1, y1, x2, y2, stroke: color, 'stroke-width': width, 'stroke-dasharray': dash || 'none' });
}

function curve(svg, points, color, width) {
    add(svg, 'polyline', { points, fill: 'none', stroke: color, 'stroke-width': width || 1.2 });
}

function grid(svg, rows, top, bottom) {
    rows.forEach((y) => hline(svg, 6, y, 3038, y, '#333', 1.5, '5 4'));
    vGrid.forEach((x) => hline(svg, x, top, x, bottom, '#2a2a2a', 1.5, '5 4'));
}

function drawPrice(svg) {
    grid(svg, [231, 381.5, 532, 682.5, 833, 983.5, 1134], 132, 1280);
    hline(svg, 6, 132.5, 3038, 132.5, '#6a6a6a', 1, '4 3');
    hline(svg, 6.5, 132, 6.5, 1280, '#6a6a6a', 1, '4 3');

    // zone, channel lines and triangle sit under the bars
    add(svg, 'rect', { x: 952, y: 480, width: 2090, height: 39, fill: '#2c2610', stroke: '#f00000', 'stroke-width': 1.2, 'stroke-dasharray': '7 4' });
    hline(svg, 981, 439, 3038, 438, '#0f69ad', 2.5);
    hline(svg, 996, 566, 3038, 559, '#0f69ad', 2.5);
    hline(svg, 981, 589, 3038, 586.5, '#0f69ad', 2.5);
    add(svg, 'polygon', { points: '2393,503 2584,536 2355,617', fill: '#1c5f93', 'fill-opacity': 0.6, stroke: '#1e9bf5', 'stroke-width': 1.5 });

    hline(svg, 6, 928.5, 3038, 928.5, '#ff0000', 4, '27 12');
    hline(svg, 2212, 618, 2752, 619, '#f00000', 3, '20 9');
    hline(svg, 1910, 695, 2828, 697, '#f00000', 3, '20 9');
    hline(svg, 1972, 741, 2814, 742, '#9000f0', 3, '20 9');

    curve(svg, upper, '#0095ff');
    curve(svg, lower, '#0095ff');
    curve(svg, basis, '#ff6a00');
    curve(svg, average, '#ff0000');

    bars.forEach((bar, i) => {
        const x = 7.5 + 15 * i;
        hline(svg, x, bar[3], x, bar[4], '#7c7c7c', 1.5);
        if (bar[0] === 'd') {
            add(svg, 'rect', { x: x - 6, y: bar[1] - 1, width: 12, height: 2.5, fill: '#7c7c7c' });
        } else {
            add(svg, 'rect', {
                x: x - 6, y: bar[1], width: 12, height: bar[2] - bar[1],
                fill: bar[0] === 'g' ? '#00ff00' : '#ff0000', stroke: '#777', 'stroke-width': 1.5
            });
        }
    });
}

function drawMacd(svg) {
    grid(svg, [1354, 1447, 1633], 1330, 1659);
    hline(svg, 6.5, 1330, 6.5, 1659, '#6a6a6a', 1, '4 3');
    hist.forEach((h, i) => {
        if (h === 0) return;
        const x = 7.5 + 15 * i;
        hline(svg, x, 1540, x, 1540 - h, histGray.has(i) ? '#666' : '#f0006a', 1.2);
    });
    hline(svg, 6, 1540, 3038, 1540, '#707070', 1.5, '5 3');
    curve(svg, macd, '#0095ff', 1.5);
    curve(svg, signal, '#ff6a00', 1.5);
}

drawPrice(document.getElementById('price-plot'));
drawMacd(document.getElementById('macd-plot'));
```
